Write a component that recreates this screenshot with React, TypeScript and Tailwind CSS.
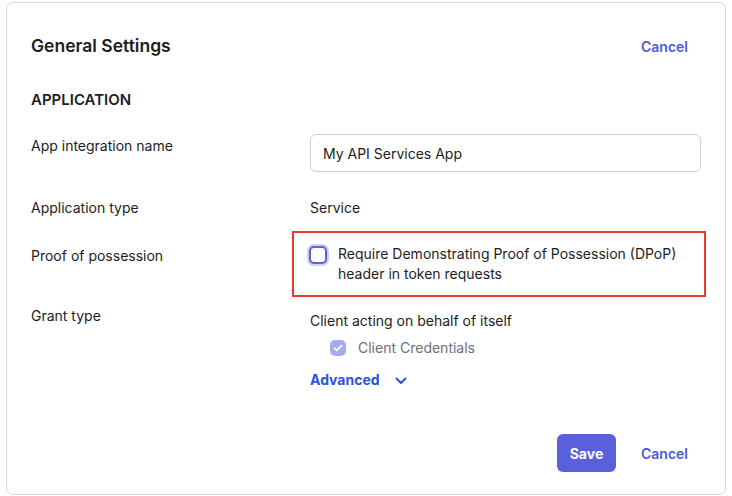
import React from "react";

export default function App() {
  return (
    <div className="w-[732px] h-[496px] bg-white pt-[2px] pl-[6px] font-['Inter',sans-serif] text-[#1d1d21]">
      <div className="w-[720px] h-[493px] border border-[#d7d7da] rounded-[7px] pl-[24px] pr-[23px] pt-[31px]">
        {/* Header */}
        <div className="flex items-center justify-between h-[24px] mr-[13px]">
          <h1 className="text-[17.5px] leading-[24px] font-semibold">General Settings</h1>
          <span className="text-[14px] font-semibold text-[#4f59d9] mr-[1px]">Cancel</span>
        </div>

        <h2 className="mt-[32px] text-[15px] leading-[20px] font-semibold">APPLICATION</h2>

        {/* Row 1 */}
        <div className="flex mt-[24px]">
          <div className="w-[279px] shrink-0 pt-[2px] text-[14px] leading-[20px]">App integration name</div>
          <div className="w-[391px] shrink-0 h-[38px] border border-[#cfcfd3] rounded-[6px] flex items-center pl-[12px] text-[14px]">
            My API Services App
          </div>
        </div>

        {/* Row 2 */}
        <div className="flex mt-[26px] text-[14px] leading-[20px]">
          <div className="w-[279px] shrink-0">Application type</div>
          <div>Service</div>
        </div>

        {/* Row 3 */}
        <div className="flex mt-[13px] text-[14px] leading-[20px]">
          <div className="w-[279px] shrink-0 pt-[15px]">Proof of possession</div>
          <div className="-ml-[18px] w-[414px] shrink-0 h-[66px] border-2 border-[#ec3a2a] pl-[15px] pt-[11px] flex">
            <div className="mt-[2px] w-[18px] h-[18px] rounded-[5px] border-[2.5px] border-[#5863de] shadow-[0_0_0_2px_rgba(88,99,222,0.3)] bg-white shrink-0" />
            <div className="ml-[11px] text-[#1d1d21]">
              Require Demonstrating Proof of Possession (DPoP)
              <br />
              header in token requests
            </div>
          </div>
        </div>

        {/* Row 4 */}
        <div className="flex mt-[9px] text-[14px] leading-[20px]">
          <div className="w-[279px] shrink-0">Grant type</div>
          <div className="pt-[5px]">
            <div>Client acting on behalf of itself</div>
            <div className="flex items-center mt-[7px] ml-[20px]">
              <div className="w-[16px] h-[16px] rounded-[5px] bg-[#a6aaee] flex items-center justify-center">
                <svg width="10" height="8" viewBox="0 0 10 8" fill="none">
                  <path d="M1.5 4.2 L3.9 6.4 L8.5 1.6" stroke="white" strokeWidth="1.8" strokeLinecap="round" strokeLinejoin="round" />
                </svg>
              </div>
              <span className="ml-[12px] text-[#6e6e78]">Client Credentials</span>
            </div>
            <div className="flex items-center mt-[12px]">
              <span className="font-bold text-[#2a55d8]">Advanced</span>
              <svg className="ml-[15px] mt-[1px]" width="12" height="8" viewBox="0 0 12 8" fill="none">
                <path d="M1.5 1.5 L6 6 L10.5 1.5" stroke="#2a55d8" strokeWidth="2" strokeLinecap="round" strokeLinejoin="round" />
              </svg>
            </div>
          </div>
        </div>

        {/* Footer */}
        <div className="flex justify-end items-center mt-[44px] mr-[13px]">
          <button className="w-[59px] h-[38px] rounded-[6px] bg-[#5a60dc] text-white text-[14px] font-bold">Save</button>
          <span className="ml-[25px] mr-[1px] text-[14px] font-semibold text-[#4f59d9]">Cancel</span>
        </div>
      </div>
    </div>
  );
}
